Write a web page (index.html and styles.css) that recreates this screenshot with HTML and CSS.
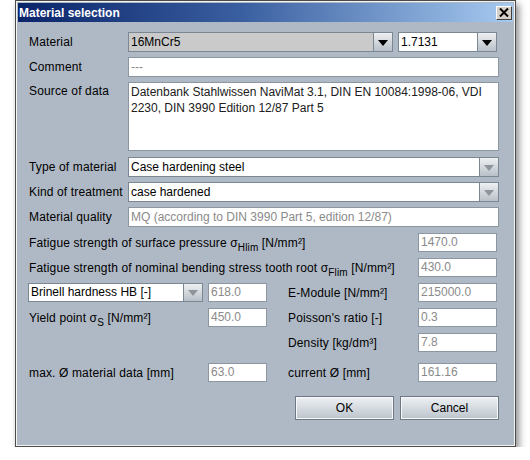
FILE: index.html
```html
<!DOCTYPE html>
<html>
<head>
<meta charset="utf-8">
<link rel="stylesheet" href="styles.css">
</head>
<body>
<div class="window">
  <div class="titlebar">
    <span class="title">Material selection</span>
    <span class="close"><svg width="10" height="9" viewBox="0 0 10 9"><path d="M1 0.5 L9 8.5 M9 0.5 L1 8.5" stroke="#000" stroke-width="2"/></svg></span>
  </div>
  <div class="content">
    <div class="row">
      <span class="label">Material</span>
      <div class="combo gray wide">
        <span class="cval">16MnCr5</span>
        <span class="arrow"><i class="tri"></i></span>
      </div>
      <div class="combo num">
        <span class="cval">1.7131</span>
        <span class="arrow"><i class="tri"></i></span>
      </div>
    </div>
    <div class="row">
      <span class="label">Comment</span>
      <div class="field grow dim">---</div>
    </div>
    <div class="row top">
      <span class="label">Source of data</span>
      <div class="field grow area">Datenbank Stahlwissen NaviMat 3.1, DIN EN 10084:1998-06, VDI 2230, DIN 3990 Edition 12/87 Part 5</div>
    </div>
    <div class="row">
      <span class="label">Type of material</span>
      <div class="combo grow">
        <span class="cval">Case hardening steel</span>
        <span class="arrow"><i class="tri off"></i></span>
      </div>
    </div>
    <div class="row">
      <span class="label">Kind of treatment</span>
      <div class="combo grow">
        <span class="cval">case hardened</span>
        <span class="arrow"><i class="tri off"></i></span>
      </div>
    </div>
    <div class="row">
      <span class="label">Material quality</span>
      <div class="field grow dim">MQ (according to DIN 3990 Part 5, edition 12/87)</div>
    </div>

    <div class="grid">
      <span class="label span3">Fatigue strength of surface pressure σ<sub>Hlim</sub> [N/mm²]</span>
      <div class="field dim c4">1470.0</div>

      <span class="label span3">Fatigue strength of nominal bending stress tooth root σ<sub>Flim</sub> [N/mm²]</span>
      <div class="field dim c4">430.0</div>

      <div class="combo small">
        <span class="cval">Brinell hardness HB [-]</span>
        <span class="arrow"><i class="tri off"></i></span>
      </div>
      <div class="field dim">618.0</div>
      <span class="label rlabel">E-Module [N/mm²]</span>
      <div class="field dim">215000.0</div>

      <span class="label">Yield point σ<sub>S</sub> [N/mm²]</span>
      <div class="field dim">450.0</div>
      <span class="label rlabel">Poisson's ratio [-]</span>
      <div class="field dim">0.3</div>

      <span class="label rlabel c3">Density [kg/dm³]</span>
      <div class="field dim">7.8</div>

      <span class="label gapt">max. Ø material data [mm]</span>
      <div class="field dim gapt">63.0</div>
      <span class="label rlabel gapt">current Ø [mm]</span>
      <div class="field dim gapt">161.16</div>
    </div>

    <div class="buttons">
      <button class="btn">OK</button>
      <button class="btn">Cancel</button>
    </div>
  </div>
</div>
</body>
</html>
```
FILE: styles.css
```css
html, body {
  margin: 0;
  padding: 0;
  background: #ffffff;
}
body {
  font-family: "Liberation Sans", Arial, sans-serif;
  font-size: 12px;
  color: #000;
}
.window {
  margin-left: 15px;
  width: 495px;
  height: 441px;
  background: #afb9c5;
  border: 1px solid #4a4a4a;
  box-shadow: inset 0 0 0 1px #f4f4f0, inset 0 0 0 2px #afb9c5, 3px 4px 7px rgba(0,0,0,0.45);
  padding: 2px;
  display: flex;
  flex-direction: column;
}
.titlebar {
  height: 19px;
  background: linear-gradient(to right, #0a246a 0%, #3a5fa0 45%, #a6caf0 100%);
  display: flex;
  align-items: center;
  justify-content: space-between;
  padding: 0 1px 0 1px;
}
.title {
  color: #fff;
  font-family: "Liberation Sans", Arial, sans-serif;
  font-weight: bold;
  font-size: 12px;
}
.close {
  width: 14px;
  height: 12px;
  background: #d4d0c8;
  border: 1px solid;
  border-color: #fff #404040 #404040 #fff;
  display: flex;
  align-items: center;
  justify-content: center;
}
.close svg { display: block; }
.content {
  padding: 10px 14px 0 11px;
  display: flex;
  flex-direction: column;
}
.row {
  display: flex;
  align-items: center;
  height: 20px;
  margin-bottom: 5px;
}
.row.top {
  align-items: flex-start;
  height: 69px;
  margin-bottom: 6px;
}
.row.top .label { padding-top: 2px; }
.label {
  width: 99px;
  flex: none;
  white-space: nowrap;
  letter-spacing: 0.14px;
}
.grow { flex: 1; }
.field {
  box-sizing: border-box;
  height: 20px;
  background: #fff;
  border: 1px solid #8c96a0;
  padding: 0 2px;
  line-height: 18px;
  white-space: nowrap;
  overflow: hidden;
}
.field.dim { color: #8a8a8a; }
.field.area {
  height: 69px;
  line-height: 16px;
  padding-top: 1px;
  white-space: normal;
  color: #202020;
}
.combo {
  box-sizing: border-box;
  height: 20px;
  display: flex;
  background: #fff;
  border: 1px solid #7c8794;
}
.combo.gray { background: #cacaca; }
.combo.wide { width: 265px; flex: none; }
.combo.num { width: 99px; margin-left: 5px; flex: none; }
.cval {
  flex: 1;
  padding: 0 2px;
  line-height: 18px;
  white-space: nowrap;
  overflow: hidden;
}
.arrow {
  width: 18px;
  flex: none;
  border-left: 1px solid #7c8794;
  background: linear-gradient(#eef0f2, #b9c0c8);
  display: flex;
  align-items: center;
  justify-content: center;
}
.tri {
  width: 0;
  height: 0;
  border-left: 5px solid transparent;
  border-right: 5px solid transparent;
  border-top: 6px solid #000;
  margin-top: 1px;
}
.tri.off { border-top-color: #8d949c; }
.grid {
  display: grid;
  grid-template-columns: 180px 59px 151px 79px;
  grid-auto-rows: 19px;
  row-gap: 6px;
  align-items: center;
  margin-top: 1px;
  margin-left: -1px;
}
.grid .field { height: 19px; line-height: 17px; }
.grid .label { width: auto; padding-left: 1px; }
.span3 { grid-column: 1 / 4; }
.c4 { grid-column: 4; }
.c3 { grid-column: 3; }
.combo.small { width: 175px; height: 19px; }
.combo.small .cval { line-height: 17px; }
.rlabel { padding-left: 21px !important; }
.gapt { margin-top: 10px; }
sub {
  font-size: 10px;
  vertical-align: -4px;
  line-height: 0;
}
.buttons {
  display: flex;
  justify-content: flex-end;
  gap: 6px;
  margin-top: 19px;
}
.btn {
  width: 99px;
  height: 24px;
  font-family: "Liberation Sans", Arial, sans-serif;
  font-size: 12px;
  color: #000;
  border: 1px solid #6e7884;
  box-shadow: inset 0 0 0 1px #f6f8fa;
  background: linear-gradient(#eef1f4, #bcc4cc);
  padding: 0;
}
```
